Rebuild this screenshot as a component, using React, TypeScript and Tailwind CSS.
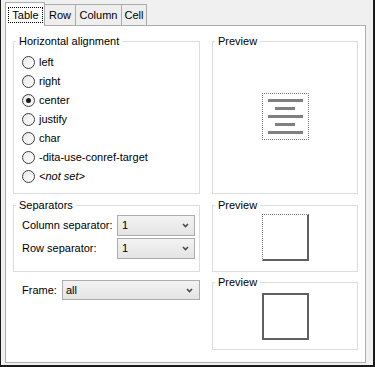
import React from 'react'

const radios = [
  { label: 'left' },
  { label: 'right' },
  { label: 'center', checked: true },
  { label: 'justify' },
  { label: 'char' },
  { label: '-dita-use-conref-target' },
  { label: '<not set>', italic: true },
]

function Chevron() {
  return (
    <svg width="7" height="5" viewBox="0 0 7 5" className="shrink-0">
      <path d="M1 1 L3.5 3.5 L6 1" fill="none" stroke="#4a4a4a" strokeWidth="1.6" />
    </svg>
  )
}

function Select({ value, className }: { value: string; className: string }) {
  return (
    <div className={'flex items-center justify-between border border-[#acacac] bg-linear-to-b from-[#f3f3f3] to-[#e4e4e4] ' + className}>
      <span>{value}</span>
      <Chevron />
    </div>
  )
}

function Legend({ children }: { children: React.ReactNode }) {
  return <span className="absolute -top-[7px] left-[2px] bg-white px-[3px] leading-[13px]">{children}</span>
}

export default function App() {
  return (
    <div className="w-[375px] h-[367px] bg-[#f0f0f0] border-l border-r-2 border-b-2 border-[#1a1a1a] font-['Liberation_Sans',Arial,sans-serif] text-[11px] text-black flex flex-col">
      {/* tabs */}
      <div className="h-[25px] pl-[4px] flex items-end shrink-0">
        <div className="relative z-10 -mb-px h-[24px] w-[40px] border border-b-0 border-[#acacac] bg-white pl-[2px] pt-[4px]">
          <div className="h-[16px] w-[35px] border border-dotted border-black flex items-center justify-center">Table</div>
        </div>
        <div className="h-[21px] w-[31px] border border-b-0 border-l-0 border-[#acacac] bg-[#eeeeee] flex items-center justify-center">Row</div>
        <div className="h-[21px] w-[46px] border border-b-0 border-l-0 border-[#acacac] bg-[#eeeeee] flex items-center justify-center">Column</div>
        <div className="h-[21px] w-[25px] border border-b-0 border-l-0 border-[#acacac] bg-[#eeeeee] flex items-center justify-center">Cell</div>
      </div>

      {/* panel */}
      <div className="ml-[4px] w-[361px] h-[338px] border border-[#acacac] bg-white px-[7px] pt-[15px] flex gap-[12px]">
        <div className="w-[187px] flex flex-col">
          <div className="relative h-[153px] border border-[#dcdcdc] pt-[11px] pl-[8px]">
            <Legend>Horizontal alignment</Legend>
            {radios.map((r) => (
              <div key={r.label} className="h-[19px] flex items-center">
                <div className="w-[13px] h-[13px] rounded-full border border-[#3c3c3c] bg-linear-to-br from-[#e8e8e8] to-white flex items-center justify-center">
                  {r.checked && <div className="w-[5px] h-[5px] rounded-full bg-[#1a1a1a]" />}
                </div>
                <span className={'ml-[4px] ' + (r.italic ? 'italic' : '')}>{r.label}</span>
              </div>
            ))}
          </div>

          <div className="relative mt-[11px] h-[67px] border border-[#dcdcdc] pt-[9px] pl-[8px] pr-[4px] flex flex-col gap-[2px]">
            <Legend>Separators</Legend>
            <div className="flex items-center justify-between h-[21px]">
              <span>Column separator:</span>
              <Select value="1" className="w-[78px] h-[21px] pl-[4px] pr-[5px]" />
            </div>
            <div className="flex items-center justify-between h-[21px]">
              <span>Row separator:</span>
              <Select value="1" className="w-[78px] h-[21px] pl-[4px] pr-[5px]" />
            </div>
          </div>

          <div className="mt-[8px] flex items-center pl-[9px]">
            <span>Frame:</span>
            <Select value="all" className="ml-auto w-[138px] h-[20px] pl-[3px] pr-[6px]" />
          </div>
        </div>

        <div className="w-[146px] flex flex-col">
          <div className="relative h-[153px] border border-[#dcdcdc] pb-[2px] flex items-center justify-center">
            <Legend>Preview</Legend>
            <div className="w-[47px] h-[47px] border border-dotted border-[#808080] flex flex-col items-center justify-center gap-[5px]">
              <div className="w-[35px] h-[3px] bg-[#808080]" />
              <div className="w-[20px] h-[3px] bg-[#808080]" />
              <div className="w-[35px] h-[3px] bg-[#808080]" />
              <div className="w-[20px] h-[3px] bg-[#808080]" />
              <div className="w-[35px] h-[3px] bg-[#808080]" />
            </div>
          </div>

          <div className="relative mt-[11px] h-[67px] border border-[#dcdcdc] pb-[2px] flex items-center justify-center">
            <Legend>Preview</Legend>
            <div className="w-[47px] h-[47px] border-t border-l border-r-2 border-b-2 [border-style:dotted_solid_solid_dotted] border-t-[#808080] border-l-[#808080] border-r-[#606060] border-b-[#606060]" />
          </div>

          <div className="relative mt-[10px] h-[68px] border border-[#dcdcdc] flex items-center justify-center">
            <Legend>Preview</Legend>
            <div className="w-[47px] h-[47px] border-2 border-[#606060]" />
          </div>
        </div>
      </div>
    </div>
  )
}
